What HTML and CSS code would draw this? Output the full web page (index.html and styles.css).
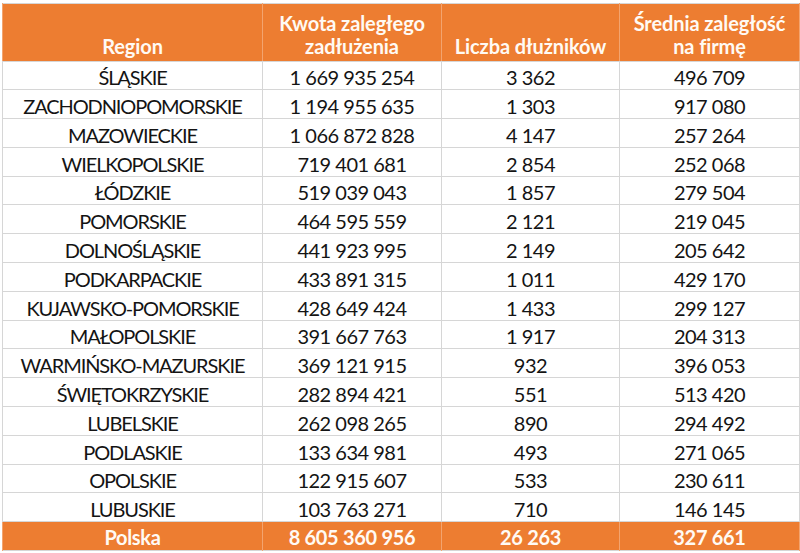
FILE: index.html
```html
<!DOCTYPE html>
<html lang="pl">
<head>
<meta charset="utf-8">
<title>Zadłużenie według regionów</title>
<link rel="stylesheet" href="styles.css">
</head>
<body>
<table class="debt">
  <colgroup>
    <col class="c1"><col class="c2"><col class="c3"><col class="c4">
  </colgroup>
  <thead>
    <tr class="head">
      <th>Region</th>
      <th>Kwota zaległego<br>zadłużenia</th>
      <th>Liczba dłużników</th>
      <th>Średnia zaległość<br>na firmę</th>
    </tr>
  </thead>
  <tbody>
    <tr><td>ŚLĄSKIE</td><td>1 669 935 254</td><td>3 362</td><td>496 709</td></tr>
    <tr><td>ZACHODNIOPOMORSKIE</td><td>1 194 955 635</td><td>1 303</td><td>917 080</td></tr>
    <tr><td>MAZOWIECKIE</td><td>1 066 872 828</td><td>4 147</td><td>257 264</td></tr>
    <tr><td>WIELKOPOLSKIE</td><td>719 401 681</td><td>2 854</td><td>252 068</td></tr>
    <tr><td>ŁÓDZKIE</td><td>519 039 043</td><td>1 857</td><td>279 504</td></tr>
    <tr><td>POMORSKIE</td><td>464 595 559</td><td>2 121</td><td>219 045</td></tr>
    <tr><td>DOLNOŚLĄSKIE</td><td>441 923 995</td><td>2 149</td><td>205 642</td></tr>
    <tr><td>PODKARPACKIE</td><td>433 891 315</td><td>1 011</td><td>429 170</td></tr>
    <tr><td>KUJAWSKO-POMORSKIE</td><td>428 649 424</td><td>1 433</td><td>299 127</td></tr>
    <tr><td>MAŁOPOLSKIE</td><td>391 667 763</td><td>1 917</td><td>204 313</td></tr>
    <tr><td>WARMIŃSKO-MAZURSKIE</td><td>369 121 915</td><td>932</td><td>396 053</td></tr>
    <tr><td>ŚWIĘTOKRZYSKIE</td><td>282 894 421</td><td>551</td><td>513 420</td></tr>
    <tr><td>LUBELSKIE</td><td>262 098 265</td><td>890</td><td>294 492</td></tr>
    <tr><td>PODLASKIE</td><td>133 634 981</td><td>493</td><td>271 065</td></tr>
    <tr><td>OPOLSKIE</td><td>122 915 607</td><td>533</td><td>230 611</td></tr>
    <tr><td>LUBUSKIE</td><td>103 763 271</td><td>710</td><td>146 145</td></tr>
  </tbody>
  <tfoot>
    <tr class="total">
      <td>Polska</td><td>8 605 360 956</td><td>26 263</td><td>327 661</td>
    </tr>
  </tfoot>
</table>
</body>
</html>
```

FILE: styles.css
```css
html, body {
  margin: 0;
  padding: 0;
  background: #ffffff;
}

body {
  padding: 3px 0 0 2px;
  font-family: Lato, "Open Sans", "Liberation Sans", sans-serif;
  color: #141414;
}

.debt {
  border-collapse: collapse;
  table-layout: fixed;
  width: 797px;
  border: 1px solid #d6d6d6;
}

.c1 { width: 260px; }
.c2 { width: 179px; }
.c3 { width: 178px; }
.c4 { width: 180px; }

.debt th,
.debt td {
  padding: 0;
  text-align: center;
  white-space: nowrap;
  overflow: hidden;
}

.head th {
  height: 53.5px;
  background: #ed7d31;
  color: #fffaf4;
  font-weight: 700;
  font-size: 20px;
  line-height: 23px;
  letter-spacing: -0.1px;
  vertical-align: bottom;
  padding-bottom: 3px;
  border-left: 1px solid #f3a46f;
  border-right: 1px solid #f3a46f;
  border-bottom: 1px solid #d6d6d6;
}

tbody td {
  height: 27.8px;
  font-size: 20px;
  line-height: 24px;
  letter-spacing: -0.5px;
  vertical-align: bottom;
  border: 1px solid #d6d6d6;
}

tbody td:first-child {
  letter-spacing: -1.1px;
}

.total td {
  height: 27px;
  background: #ed7d31;
  color: #fffaf4;
  font-weight: 700;
  font-size: 20px;
  line-height: 24px;
  letter-spacing: -0.3px;
  vertical-align: bottom;
  padding-bottom: 1px;
  border-left: 1px solid #f3a46f;
  border-right: 1px solid #f3a46f;
  border-top: 1px solid #d6d6d6;
}
```
